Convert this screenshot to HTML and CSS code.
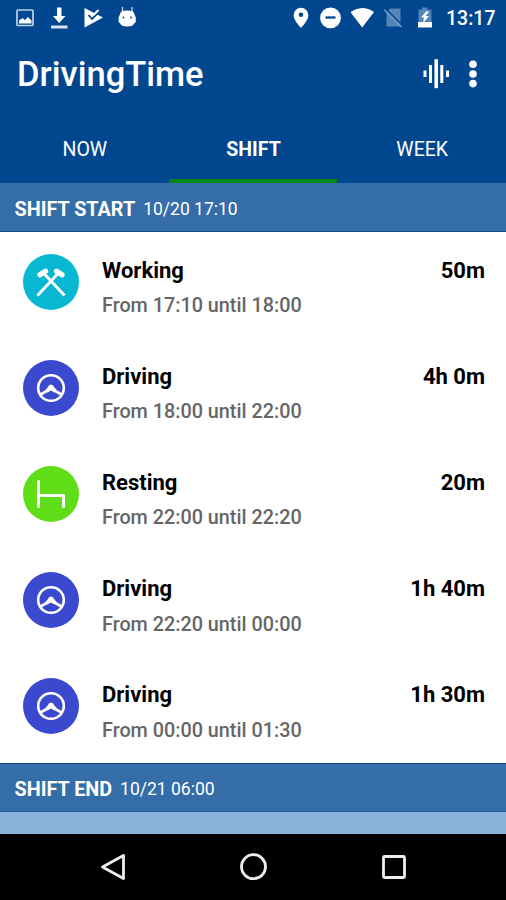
FILE: index.html
```html
<!DOCTYPE html>
<html lang="en">
<head>
  <meta charset="UTF-8">
  <meta name="viewport" content="width=device-width, initial-scale=1.0">
  <title>DrivingTime</title>
  <link rel="stylesheet" href="styles.css">
</head>
<body>
  <!-- shared icons for the shift list -->
  <svg class="sprite" aria-hidden="true">
    <symbol id="icon-wheel" viewBox="0 0 56 56">
      <g fill="none" stroke="#fff" stroke-width="2.6">
        <circle cx="28" cy="28" r="12.8"/>
        <path d="M17.5 34.5 28 28.5l10.5 6"/>
      </g>
      <path d="M28 24.5q2.500 0 3 2.500l3 3.500-2.500 2-3.500-2-3.500 2-2.500-2 3-3.500q.5-2.500 3-2.500z" fill="#fff"/>
    </symbol>
    <symbol id="icon-hammers" viewBox="0 0 56 56">
      <g stroke="#fff" fill="none">
        <path d="M14.5 41.5 35.5 19M41.5 41.5 20.5 19" stroke-width="2.9"/>
        <path d="M17 20.8l5.500-3.600M39 20.8l-5.500-3.600" stroke-width="5.2" stroke-linecap="round"/>
      </g>
    </symbol>
    <symbol id="icon-bed" viewBox="0 0 56 56">
      <path d="M15.5 15.5v25M15.5 29.5H40.5V40.5" fill="none" stroke="#fff" stroke-width="3" stroke-linecap="round" stroke-linejoin="round"/>
    </symbol>
  </svg>

  <div class="screen">
    <header>
      <div class="status-bar">
        <div class="status-left">
          <svg width="22" height="24" viewBox="0 0 22 24">
            <rect x="3" y="4" width="16" height="15.5" rx="1" fill="none" stroke="#fff" stroke-width="1.7" opacity=".75"/>
            <path d="M5 17.5v-3l3.500-2.500 2.500 2 3-3 3.500 3.500v3z" fill="#fff"/>
          </svg>
          <svg width="22" height="24" viewBox="0 0 22 24">
            <path d="M9 1.500h4.500v8.500h4L11.200 17 5 10h4z" fill="#fff"/>
            <path d="M3 21h16.500" stroke="#fff" stroke-width="3" opacity=".85"/>
          </svg>
          <svg width="22" height="24" viewBox="0 0 22 24">
            <path d="M2.500 2 21 11.500 2.500 21.500z" fill="#fff"/>
            <path d="M6.500 9l3.500 4L18.500 4.500" fill="none" stroke="#004790" stroke-width="1.8"/>
            <path d="M11.500 9l5-5" stroke="#fff" stroke-width="2"/>
          </svg>
          <svg width="22" height="24" viewBox="0 0 22 24">
            <path d="M6.500 1v6M16 1v6" stroke="#fff" stroke-width="1.300" opacity=".8"/>
            <path d="M4.300 7.500Q4.300 4.500 11.200 4.500t6.900 3l1.700 4v4.500l-1.700 1.500Q17.500 20.500 11.200 20.500T4.300 17.500l-1.700-1.500v-4.500z" fill="#fff"/>
            <circle cx="7.5" cy="11.5" r=".9" fill="#004790"/>
            <circle cx="15" cy="11.5" r=".9" fill="#004790"/>
          </svg>
        </div>
        <div class="status-right">
          <svg width="24" height="24" viewBox="0 0 24 24">
            <path d="M12 1.800a7.400 7.400 0 0 0-7.400 7.400C4.600 14.500 12 21.800 12 21.800s7.400-7.300 7.400-12.600A7.400 7.400 0 0 0 12 1.800z" fill="#fff"/>
            <circle cx="12" cy="8.8" r="2.3" fill="#004790"/>
          </svg>
          <svg width="24" height="24" viewBox="0 0 24 24">
            <circle cx="10.5" cy="11.8" r="10.4" fill="#fff"/>
            <path d="M5.500 11.500h10" stroke="#004790" stroke-width="2.3"/>
          </svg>
          <svg width="25" height="24" viewBox="0 0 25 24">
            <path d="M-.5 6Q11 -2 23 6L11.200 21.500z" fill="#fff"/>
          </svg>
          <svg width="23" height="24" viewBox="0 0 23 24">
            <path d="M7 2.500h10.500v18H3.500V6.500z" fill="#5586b8"/>
            <path d="M3 3 19.500 19.500" stroke="#004790" stroke-width="1.5"/>
            <path d="M1 3.500 18.500 21" stroke="#7298c4" stroke-width="1.4"/>
          </svg>
          <svg width="24" height="24" viewBox="0 0 24 24">
            <path d="M9 1.500h5.500v2H18.500v13h-13v-13H9z" fill="#5586b8"/>
            <path d="M5 16h14v5.500H5z" fill="#fff"/>
            <path d="M13.500 5 8 11.500h3L10 17.500 16 10h-3.500l3.500-4z" fill="#fff"/>
          </svg>
          <span class="clock">13:17</span>
        </div>
      </div>

      <div class="toolbar">
        <h1>DrivingTime</h1>
        <div class="actions">
          <svg width="28" height="32" viewBox="0 0 28 32">
            <g stroke="#fff" stroke-width="3">
              <path d="M3 12.500v6.500M8.500 7v18M19.800 7v18M25.500 12.500v6.500"/>
              <path d="M14.200 1.200v29" stroke-width="3.5"/>
            </g>
          </svg>
          <svg width="10" height="32" viewBox="0 0 10 32" fill="#fff">
            <circle cx="5" cy="6.2" r="3.8"/>
            <circle cx="5" cy="16" r="3.8"/>
            <circle cx="5" cy="25.6" r="3.8"/>
          </svg>
        </div>
      </div>

      <nav class="tabs">
        <div class="tab"><span>NOW</span></div>
        <div class="tab active"><span>SHIFT</span></div>
        <div class="tab"><span>WEEK</span></div>
      </nav>
    </header>

    <div class="section start">
      <span class="section-name">SHIFT START</span>
      <span class="section-date">10/20 17:10</span>
    </div>

    <ul class="shift-list">
      <li>
        <svg class="badge working"><use href="#icon-hammers"/></svg>
        <div class="details">
          <div class="title">Working</div>
          <div class="period">From 17:10 until 18:00</div>
        </div>
        <div class="duration">50m</div>
      </li>
      <li>
        <svg class="badge driving"><use href="#icon-wheel"/></svg>
        <div class="details">
          <div class="title">Driving</div>
          <div class="period">From 18:00 until 22:00</div>
        </div>
        <div class="duration">4h 0m</div>
      </li>
      <li>
        <svg class="badge resting"><use href="#icon-bed"/></svg>
        <div class="details">
          <div class="title">Resting</div>
          <div class="period">From 22:00 until 22:20</div>
        </div>
        <div class="duration">20m</div>
      </li>
      <li>
        <svg class="badge driving"><use href="#icon-wheel"/></svg>
        <div class="details">
          <div class="title">Driving</div>
          <div class="period">From 22:20 until 00:00</div>
        </div>
        <div class="duration">1h 40m</div>
      </li>
      <li>
        <svg class="badge driving"><use href="#icon-wheel"/></svg>
        <div class="details">
          <div class="title">Driving</div>
          <div class="period">From 00:00 until 01:30</div>
        </div>
        <div class="duration">1h 30m</div>
      </li>
    </ul>

    <div class="section end">
      <span class="section-name">SHIFT END</span>
      <span class="section-date">10/21 06:00</span>
    </div>

    <div class="filler"></div>

    <footer class="nav-bar">
      <svg width="28" height="28" viewBox="0 0 28 28">
        <path d="M24.500 2.500v23L3.500 14z"/>
      </svg>
      <svg width="28" height="28" viewBox="0 0 28 28">
        <circle cx="14.5" cy="13.7" r="12"/>
      </svg>
      <svg width="28" height="28" viewBox="0 0 28 28">
        <rect x="3.5" y="3.5" width="21" height="21" rx="1"/>
      </svg>
    </footer>
  </div>
</body>
</html>
```

FILE: styles.css
```css
* {
  box-sizing: border-box;
}

body {
  margin: 0;
  font-family: Roboto, "Liberation Sans", sans-serif;
  background-color: #000;
  color: #000;
}

.sprite {
  display: none;
}

.screen {
  display: flex;
  flex-direction: column;
  width: 506px;
  height: 900px;
  overflow: hidden;
}

header {
  height: 183px;
  background-color: #004790;
  color: #fff;
}

/* status bar */
.status-bar {
  display: flex;
  justify-content: space-between;
  align-items: center;
  height: 35px;
  padding: 0 11px 0 14px;
}

.status-left {
  display: flex;
  gap: 12px;
}

.status-right {
  display: flex;
  align-items: center;
  gap: 7px;
}

.clock {
  margin-left: 3px;
  width: 48px;
  padding-top: 2px;
  font-size: 19.5px;
  font-weight: 500;
  line-height: 24px;
  white-space: nowrap;
  text-indent: -1px;
}

/* title and actions */
.toolbar {
  display: flex;
  justify-content: space-between;
  align-items: center;
  height: 77px;
  padding: 0 28px 0 17px;
}

h1 {
  margin: 0;
  font-size: 34.5px;
  font-weight: 500;
}

.actions {
  display: flex;
  gap: 18px;
}

.tabs {
  display: flex;
  height: 71px;
}

.tab {
  flex: 1;
  display: flex;
  justify-content: center;
  align-items: center;
  padding: 8px 0 0 1px;
  border-bottom: 4px solid transparent;
  font-size: 19.5px;
}

.tab.active {
  border-color: #068518;
  font-weight: 700;
}

/* shift start / shift end bars */
.section {
  display: flex;
  align-items: center;
  gap: 8px;
  height: 49px;
  padding: 3px 14.5px 0;
  background-color: #356da8;
  color: #fff;
}

.section.start {
  padding-top: 4px;
  border-bottom: 1px solid #12488f;
}

.section.end {
  border-top: 1px solid #12488f;
  border-bottom: 1px solid #1d5c9f;
}

.section-name {
  font-size: 19.8px;
  font-weight: 700;
}

.section-date {
  font-size: 17.5px;
}

.shift-list {
  display: flex;
  flex-direction: column;
  height: 531px;
  margin: 0;
  padding: 0;
  list-style: none;
  background-color: #fff;
}

.shift-list li {
  flex: 1;
  display: flex;
  align-items: flex-start;
  padding: 21.6px 21px 0 23px;
}

.badge {
  flex: none;
  width: 56px;
  height: 56px;
  border-radius: 50%;
}

.working {
  background-color: #08b8d2;
}

.driving {
  background-color: #3b49cf;
}

.resting {
  background-color: #5fdd17;
}

.details {
  flex: 1;
  margin-left: 23px;
}

.title,
.duration {
  padding-top: 1px;
  font-size: 22px;
  font-weight: 700;
  line-height: 32px;
}

.period {
  margin-top: 4.4px;
  font-size: 19.8px;
  font-weight: 500;
  line-height: 30px;
  color: #666;
}

.filler {
  height: 22px;
  background-color: #89b3da;
}

/* android buttons */
.nav-bar {
  display: flex;
  justify-content: center;
  align-items: center;
  gap: 112.5px;
  height: 66px;
  background-color: #000;
}

.nav-bar svg {
  fill: none;
  stroke: #eee;
  stroke-width: 2.8;
  stroke-linejoin: round;
}
```
